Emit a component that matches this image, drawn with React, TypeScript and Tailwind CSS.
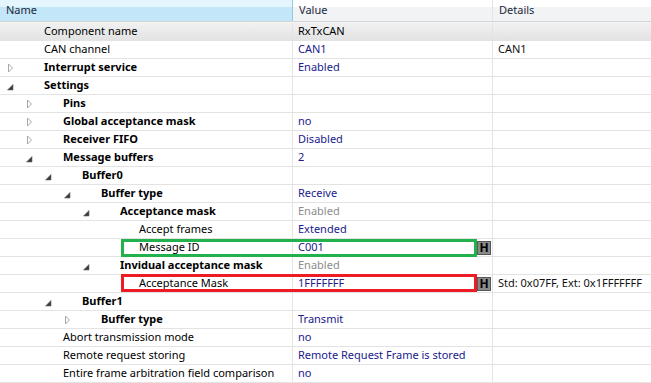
import React from "react";

type Row = {
  level: number;
  name: string;
  exp?: "c" | "e";
  bold?: boolean;
  value?: string;
  vc?: "black" | "navy" | "gray";
  details?: string;
  selected?: boolean;
  h?: boolean;
  box?: "green" | "red";
};

const rows: Row[] = [
  { level: 0, name: "Component name", value: "RxTxCAN", vc: "black", selected: true },
  { level: 0, name: "CAN channel", value: "CAN1", details: "CAN1" },
  { level: 0, name: "Interrupt service", exp: "c", bold: true, value: "Enabled" },
  { level: 0, name: "Settings", exp: "e", bold: true },
  { level: 1, name: "Pins", exp: "c", bold: true },
  { level: 1, name: "Global acceptance mask", exp: "c", bold: true, value: "no" },
  { level: 1, name: "Receiver FIFO", exp: "c", bold: true, value: "Disabled" },
  { level: 1, name: "Message buffers", exp: "e", bold: true, value: "2" },
  { level: 2, name: "Buffer0", exp: "e", bold: true },
  { level: 3, name: "Buffer type", exp: "e", bold: true, value: "Receive" },
  { level: 4, name: "Acceptance mask", exp: "e", bold: true, value: "Enabled", vc: "gray" },
  { level: 5, name: "Accept frames", value: "Extended" },
  { level: 5, name: "Message ID", value: "C001", h: true, box: "green" },
  { level: 4, name: "Invidual acceptance mask", exp: "e", bold: true, value: "Enabled", vc: "gray" },
  {
    level: 5,
    name: "Acceptance Mask",
    value: "1FFFFFFF",
    h: true,
    box: "red",
    details: "Std: 0x07FF, Ext: 0x1FFFFFFF",
  },
  { level: 2, name: "Buffer1", exp: "e", bold: true },
  { level: 3, name: "Buffer type", exp: "c", bold: true, value: "Transmit" },
  { level: 1, name: "Abort transmission mode", value: "no" },
  { level: 1, name: "Remote request storing", value: "Remote Request Frame is stored" },
  { level: 1, name: "Entire frame arbitration field comparison", value: "no" },
];

const indent: Record<number, string> = {
  0: "pl-0",
  1: "pl-[19px]",
  2: "pl-[38px]",
  3: "pl-[57px]",
  4: "pl-[76px]",
  5: "pl-[95px]",
};

function Expander({ kind }: { kind?: "c" | "e" }) {
  if (kind === "c")
    return (
      <svg width="7" height="10" viewBox="0 0 7 10" className="block">
        <path d="M1.5 1 L5.5 5 L1.5 9 Z" fill="#ffffff" stroke="#a8a8a8" strokeWidth="1" />
      </svg>
    );
  if (kind === "e")
    return (
      <svg width="7" height="7" viewBox="0 0 7 7" className="block mt-[3px]">
        <path d="M6 0.5 L6 6 L0.5 6 Z" fill="#3a3a3a" stroke="#6a6a6a" strokeWidth="0.6" />
      </svg>
    );
  return null;
}

export default function App() {
  return (
    <div
      className="w-[651px] h-[383px] bg-white overflow-hidden text-[11px] text-black"
      style={{ fontFamily: '"Noto Sans", "Open Sans", sans-serif' }}
    >
      {/* Header */}
      <div className="flex h-[22px] border-b border-[#d5d5d5]">
        <div className="w-[293px] flex flex-col border-r border-[#96c8e2] relative">
          <div className="h-[7px] bg-[#e4f5fd]" />
          <div className="flex-1 bg-[#c3e6f8]" />
          <div className="absolute inset-0 flex items-center pl-[6px] text-[#1b2a3c]">Name</div>
        </div>
        <div className="w-[200px] flex flex-col border-r border-[#e3e4e6] relative">
          <div className="h-[7px] bg-white" />
          <div className="flex-1 bg-[#f2f3f5]" />
          <div className="absolute inset-0 flex items-center pl-[6px] text-[#1b2a3c]">Value</div>
        </div>
        <div className="flex-1 flex flex-col relative">
          <div className="h-[7px] bg-white" />
          <div className="flex-1 bg-[#f2f3f5]" />
          <div className="absolute inset-0 flex items-center pl-[6px] text-[#1b2a3c]">Details</div>
        </div>
      </div>

      {rows.map((r, i) => {
        const valueColor =
          r.vc === "black" ? "text-black" : r.vc === "gray" ? "text-[#8c8c8c]" : "text-[#20208c]";
        return (
          <div
            key={i}
            className={
              "relative flex border-b border-[#e3e3e3] " +
              (r.selected
                ? "h-[19px] border-t border-t-[#f4f4f4] bg-gradient-to-b from-[#f1f1f1] to-[#e3e3e3]"
                : "h-[18px]")
            }
          >
            <div className={"w-[293px] flex items-center border-r border-[#e3e3e3] overflow-hidden whitespace-nowrap " + indent[r.level]}>
              <div className="w-[44px] shrink-0 flex items-center pl-[7px]">
                <Expander kind={r.exp} />
              </div>
              <span className={r.bold ? "font-bold" : ""}>{r.name}</span>
            </div>
            <div className="w-[200px] flex items-center border-r border-[#e3e3e3] pl-[5px] whitespace-nowrap overflow-hidden">
              <span className={valueColor}>{r.value}</span>
              {r.h && (
                <span className="ml-auto mr-[1px] w-[14px] h-[14px] flex items-center justify-center bg-[#8a8a8a] border border-[#585858] text-black font-bold text-[12px] leading-none">
                  H
                </span>
              )}
            </div>
            <div className="flex-1 flex items-center pl-[5px] whitespace-nowrap overflow-hidden text-[#111]">
              {r.details}
            </div>
            {r.box && (
              <div
                className={
                  "absolute left-[121px] w-[356px] h-[18px] border-[3px] " +
                  (r.box === "green" ? "top-0 border-[#22b14c]" : "-top-px border-[#ed1c24]")
                }
              />
            )}
          </div>
        );
      })}
    </div>
  );
}
